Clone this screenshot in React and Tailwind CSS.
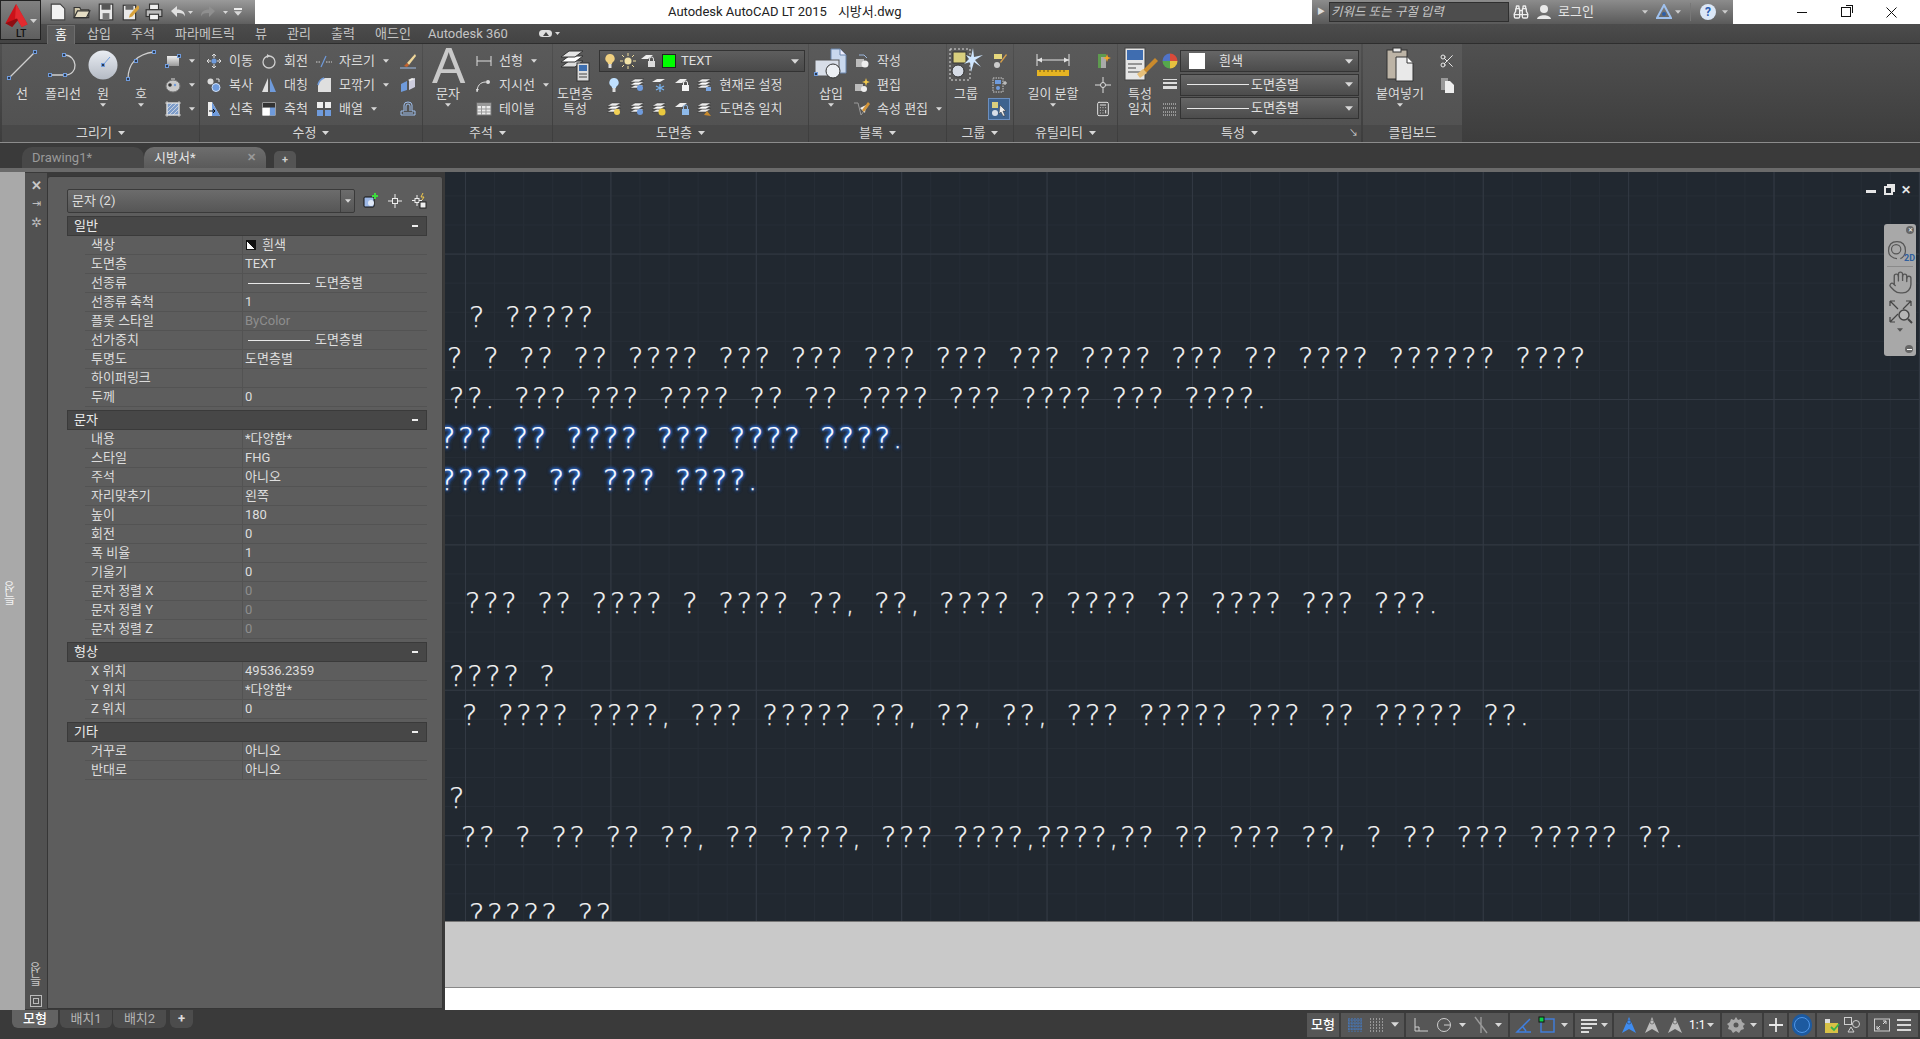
import React from "react";
import { Binoculars, Scissors, Calculator, Hand } from "lucide-react";

const B = "#6f9bdc";
const S = ({ s = 16, w, h, vb, children, className = "" }) => (
  <svg width={w || s} height={h || s} viewBox={vb || `0 0 ${w || s} ${h || s}`} fill="none" className={"shrink-0 " + className}>{children}</svg>
);
const Tri = ({ c = "#d8d8d8", s = 7 }) => (
  <svg width={s} height={Math.round(s * 0.6)} viewBox="0 0 7 4" className="shrink-0"><path d="M0 0h7L3.5 4z" fill={c} /></svg>
);
const H = ({ x, y }) => <rect x={x - 1.5} y={y - 1.5} width="3" height="3" stroke={B} fill="#2c3a50" />;

/* ---------- big ribbon icons ---------- */
const ILine = () => (<S s={34}><path d="M5 29L29 5" stroke="#cfcfcf" strokeWidth="1.2" /><H x={4} y={30} /><H x={30} y={4} /></S>);
const IPoly = () => (<S s={34}><path d="M4 27H19C33 27 32 7 18 7" stroke="#cfcfcf" strokeWidth="1.3" /><H x={4} y={27} /><H x={19} y={27} /><H x={18} y={7} /></S>);
const ICircle = () => (<S s={34}><defs><linearGradient id="cg" x1="0" y1="0" x2="0" y2="1"><stop offset="0" stopColor="#e9edf3" /><stop offset="1" stopColor="#b4bac4" /></linearGradient></defs><circle cx="17" cy="17" r="14.5" fill="url(#cg)" /><path d="M17 17L24 9" stroke={B} /><H x={17} y={17} /></S>);
const IArc = () => (<S s={34}><path d="M4 31C4 15 14 6 30 4" stroke="#cfcfcf" strokeWidth="1.3" /><H x={4} y={31} /><H x={12} y={13} /><H x={30} y={4} /></S>);
const IA = () => (<div className="h-[36px] w-[32px] text-center text-[50px] leading-[38px] font-['Liberation_Sans',sans-serif] text-[#c9c9c9]">A</div>);
const LayerStack = ({ size = 16, accent }) => (
  <S s={size} vb="0 0 16 16">
    <path d="M1 11l5-3h9l-5 3z" fill="#eee" stroke="#333" strokeWidth=".5" />
    <path d="M1 8l5-3h9l-5 3z" fill="#fff" stroke="#333" strokeWidth=".5" />
    <path d="M1 5l5-3h9l-5 3z" fill="#eee" stroke="#333" strokeWidth=".5" />
    {accent}
  </S>
);
const ILayerProp = () => (<S s={34}>
  <path d="M3 19l8-6h14l-8 6z" fill="#ddd" stroke="#333" /><path d="M3 14l8-6h14l-8 6z" fill="#fff" stroke="#333" /><path d="M3 9l8-6h14l-8 6z" fill="#e5e5e5" stroke="#333" />
  <rect x="19" y="15" width="12" height="18" fill="#dcdcdc" stroke="#333" /><rect x="21" y="17" width="8" height="6" fill="#3e6fb0" /><path d="M21 26h8M21 29h8" stroke="#444" />
</S>);
const IInsert = () => (<S s={36}>
  <path d="M18 2h9l6 6v18H18z" fill="#c9d8ee" stroke="#6b86ad" /><path d="M27 2v6h6" fill="#eef" stroke="#6b86ad" />
  <rect x="2" y="13" width="24" height="16" fill="#d8dee8" stroke="#555" /><circle cx="20" cy="24" r="7" fill="#eceff3" stroke="#333" /><H x={3} y={27} />
</S>);
const IGroup = () => (<S s={36}>
  <rect x="2" y="2" width="20" height="31" stroke="#ddd" strokeDasharray="2 2" />
  <rect x="5" y="5" width="13" height="11" fill="#d9cf7e" stroke="#333" />
  <circle cx="10" cy="24" r="6" fill="#d6dce6" stroke="#333" />
  <path d="M25 1l1 9 9-2-8 5 6 7-7-5-3 10-1-10-6 2 5-5-3-4 5 2z" fill="#cfe6ff" />
</S>);
const IRuler = () => (<S w={36} h={30} vb="0 0 36 30">
  <path d="M2 4v12M34 4v12M2 10h32" stroke="#e2e2e2" /><path d="M2 10l5-2.5v5zM34 10l-5-2.5v5z" fill="#e2e2e2" />
  <rect x="2" y="20" width="32" height="6" fill="#e6b422" /><path d="M5 20v2M9 20v2M13 20v2M17 20v2M21 20v2M25 20v2M29 20v2" stroke="#6b5210" />
</S>);
const IMatch = () => (<S s={36}>
  <rect x="3" y="1" width="20" height="32" fill="#e6e6e6" stroke="#444" /><rect x="5" y="3" width="16" height="10" fill="#3f6db0" />
  <path d="M6 17h14M6 21h8M6 25h14" stroke="#444" />
  <path d="M33 11L21 23l3 3 12-12z" fill="#c98a2c" /><path d="M21 22l-6 5 3 4 7-5z" fill="#e7c07a" />
</S>);
const IPaste = () => (<S s={36}>
  <rect x="5" y="3" width="20" height="29" fill="#bdb4a6" stroke="#333" /><rect x="11" y="1" width="8" height="4" fill="#eee" stroke="#333" />
  <path d="M14 10h11l6 6v18H14z" fill="#e9e9e9" stroke="#333" /><path d="M25 10v6h6" fill="#fff" stroke="#333" />
</S>);

/* ---------- small ribbon icons ---------- */
const IRect = () => (<S><defs><linearGradient id="rg" x1="0" x2="0" y1="0" y2="1"><stop offset="0" stopColor="#eee" /><stop offset="1" stopColor="#999" /></linearGradient></defs><rect x="2" y="3" width="12" height="10" fill="url(#rg)" /><H x={2} y={13} /><H x={14} y={3} /></S>);
const IHatchRound = () => (<S><ellipse cx="8" cy="9" rx="7" ry="6" fill="#c9c9c9" stroke="#777" /><circle cx="5" cy="8" r="1.8" fill="#333" /><circle cx="10" cy="8" r="1.2" fill={B} /><rect x="6" y="1" width="4" height="2" fill="#999" /></S>);
const IHatch = () => (<S><rect x="2" y="2" width="12" height="12" fill="#7d9cc9" stroke="#ddd" /><path d="M2 8l6-6M2 12l10-10M4 14l10-10M8 14l6-6M0 2h16M0 14h16M2 0v16M14 0v16" stroke="#e6e6e6" strokeWidth=".7" /></S>);
const IMove = () => (<S><path d="M8 1v4M8 11v4M1 8h4M11 8h4M8 1L6 3M8 1l2 2M8 15l-2-2M8 15l2-2M1 8l2-2M1 8l2 2M15 8l-2-2M15 8l-2 2" stroke="#ddd" /><circle cx="8" cy="8" r="2.6" fill={B} /></S>);
const IRotate = () => (<S><circle cx="8" cy="9" r="6" stroke="#cfcfcf" strokeWidth="1.3" /><path d="M6 1l3 2-3 2z" fill="#cfcfcf" /></S>);
const ITrim = () => (<S><path d="M0 9h5M10 9h6" stroke="#cfcfcf" strokeDasharray="1.5 1" /><path d="M5 14L10 3" stroke={B} strokeWidth="1.2" /></S>);
const ICopy = () => (<S><circle cx="4.5" cy="4.5" r="3" fill="#ddd" /><circle cx="10" cy="10.5" r="4" fill={B} stroke="#cfe0f8" /><path d="M10 2l3 0v3" stroke="#ddd" /></S>);
const IMirror = () => (<S><path d="M7 1v14H1z" fill="#dfdfdf" /><path d="M9 1v14h6z" fill={B} /></S>);
const IFillet = () => (<S><path d="M2 15V9Q2 3 9 1h6v14z" fill="#dfdfdf" /><path d="M2 8Q3 3 8 1" stroke={B} strokeWidth="1.6" /></S>);
const IStretch = () => (<S><path d="M2 1h4l8 14H2z" fill="#eee" /><path d="M6 1l8 14H6z" fill={B} /><path d="M3 10h6M7 8l2 2-2 2" stroke="#111" /></S>);
const IScale = () => (<S><rect x="1.5" y="1.5" width="13" height="13" fill="#ddd" /><rect x="1.5" y="7" width="7" height="7.5" fill="#fff" /><rect x="9" y="2" width="5" height="12.5" fill={B} /><rect x="2" y="2" width="12" height="4.5" fill="#333" /></S>);
const IArray = () => (<S><rect x="1" y="1" width="6" height="6" fill="#eee" /><rect x="9" y="1" width="6" height="6" fill="#eee" /><rect x="1" y="9" width="6" height="6" fill={B} /><rect x="9" y="9" width="6" height="6" fill={B} /></S>);
const IBrush = () => (<S><path d="M15 1L7 10l2 2 7-9z" fill="#f0d79a" /><path d="M7 10l-3 3 3 1 2-2z" fill="#c4622d" /><path d="M0 15h16" stroke="#9fbbe3" /></S>);
const IExplode = () => (<S><path d="M1 7l6-3v9l-6 2z" fill={B} /><path d="M9 3l6-2v9l-6 3z" fill="#ccd" /><path d="M8 3l4-2 3 1-5 2z" fill="#eee" /></S>);
const IOffset = () => (<S><path d="M1 14V10H4V4Q4 1 8 1T12 4V10H15V14z" stroke="#9fc0ee" /><path d="M3 12h10M6 10V5q0-2 2-2t2 2v5" stroke="#9fc0ee" /></S>);
const IDim = () => (<S><path d="M1 3v10M15 3v10M1 8h14" stroke="#ddd" /></S>);
const ILeader = () => (<S><path d="M1 15C1 9 4 5 10 5" stroke="#ddd" /><circle cx="12" cy="5" r="2" fill="#ddd" /><path d="M1 15l-1-3h3z" fill="#ddd" /></S>);
const ITable = () => (<S><rect x="1" y="2" width="14" height="12" fill="#ececec" stroke="#777" /><rect x="1" y="2" width="14" height="3" fill="#999" /><path d="M5.5 5v9M10 5v9M1 8h14M1 11h14" stroke="#999" /></S>);
const Bulb = ({ c = "#f0d080" }) => (<S><path d="M8 1a4.5 4.5 0 0 0-3 8c.8.8 1 1.4 1 2h4c0-.6.2-1.2 1-2a4.5 4.5 0 0 0-3-8z" fill={c} /><rect x="6.5" y="11" width="3" height="4" fill="#ddd" /></S>);
const SunI = () => (<S><circle cx="8" cy="8" r="3.5" fill="#f2e3a8" /><path d="M8 0v3M8 13v3M0 8h3M13 8h3M2 2l2 2M12 12l2 2M14 2l-2 2M2 14l2-2" stroke="#eedc9c" /></S>);
const LockI = ({ c = "#dcdcdc" }) => (<S><path d="M1 6l5-4h7l-5 4z" fill="#eee" /><rect x="8" y="8" width="7" height="6" fill={c} /><path d="M9.5 8V6a2 2 0 0 1 4 0v2" stroke={c} /></S>);
const LSun = () => <LayerStack accent={<circle cx="11" cy="11" r="3" fill="#f1d055" />} />;
const LBlue = () => <LayerStack accent={<circle cx="11" cy="11" r="3" fill={B} />} />;
const LGreen = () => <LayerStack accent={<path d="M8 14l3-4 4 5z" fill="#c98a2c" />} />;
const FreezeI = () => (<S><path d="M1 5l5-3h8l-5 3z" fill="#eee" /><path d="M9 7v8M5 9l8 4M13 9l-8 4" stroke="#79b3ee" strokeWidth="1.3" /></S>);
const Block1 = () => (<S><rect x="2" y="6" width="8" height="8" fill="#bbb" /><circle cx="11" cy="11" r="3.5" fill="#eee" /><path d="M5 2h5l3 3" stroke="#9db7dd" /></S>);
const Block2 = () => (<S><rect x="1" y="7" width="8" height="7" fill="#bbb" /><circle cx="10" cy="12" r="3" fill="#eee" /><path d="M12 1l1 3 3 1-3 1-1 3-1-3-3-1 3-1z" fill="#f2c94c" /></S>);
const AttrI = () => (<S><path d="M0 2l4 0 3 12 7-9" stroke="#9a9a9a" /><path d="M6 7l6-3-1 8z" fill="#eee" /><path d="M14 1L8 9l2 2 6-8z" fill="#d29438" /></S>);
const GroupS1 = () => (<S><rect x="3" y="1" width="8" height="5" fill="#e6d87c" /><circle cx="6" cy="12" r="3" fill="#ccc" /><path d="M15 1L9 9l1 1 6-8z" fill="#d6a04a" /></S>);
const GroupS2 = () => (<S><rect x="2" y="1" width="10" height="14" stroke="#ccc" strokeDasharray="1.5 1" /><rect x="4" y="3" width="6" height="4" fill={B} /><circle cx="7" cy="11" r="2" fill={B} /><path d="M12 6h4M14 4v4" stroke="#ddd" /></S>);
const GroupS3 = () => (<S><rect x="1" y="1" width="6" height="6" fill="#d9cf7e" /><circle cx="4" cy="12" r="3" fill="#d8dee8" /><path d="M9 4l6 6-3 0 2 5-2 0-2-4-2 2z" fill="#eee" stroke="#333" strokeWidth=".5" /></S>);
const UtilA = () => (<S><rect x="3" y="1" width="8" height="14" fill="#5e9a4f" /><rect x="6" y="4" width="5" height="11" fill="#aaa" /><path d="M12 1l1 3 3 1-3 1-1 3-1-3-3-1 3-1z" fill="#f5a623" /></S>);
const Cross = () => (<S><path d="M8 0v16M0 8h16" stroke="#ddd" /><circle cx="8" cy="8" r="2.5" stroke="#ddd" fill="#555" /></S>);
const Wheel = () => (<S><path d="M8 8V0.5A7.5 7.5 0 0 1 15.5 8z" fill="#d94a3a" /><path d="M8 8h7.5A7.5 7.5 0 0 1 8 15.5z" fill="#e7c13f" /><path d="M8 8v7.5A7.5 7.5 0 0 1 .5 8z" fill="#56a84c" /><path d="M8 8H.5A7.5 7.5 0 0 1 8 .5z" fill="#5073c8" /></S>);
const LwI = () => (<S><rect x="1" y="2" width="14" height="1" fill="#ddd" /><rect x="1" y="5" width="14" height="2" fill="#ddd" /><rect x="1" y="9" width="14" height="3" fill="#ddd" /></S>);
const LtI = () => (<S><path d="M1 3h14M1 7h14M1 11h14M1 14h14" stroke="#ddd" strokeDasharray="1 1" /></S>);
const CopyDoc = () => (<S><path d="M2 1h7v12H2z" fill="#999" /><path d="M6 4h5l4 4v8H6z" fill="#eee" /></S>);

/* ---------- layout pieces ---------- */
const Panel = ({ className, title, corner, noArrow, children }) => (
  <div className={"flex flex-col shrink-0 " + className}>
    <div className="flex h-[81px] bg-gradient-to-b from-[#5a5a5a] to-[#525252]">{children}</div>
    <div className="relative flex h-[17px] items-center justify-center gap-[6px] bg-[#494949] pb-[2px] text-[#d8d8d8]">
      <span>{title}</span>{!noArrow && <Tri />}
      {corner && <span className="absolute right-[3px] top-[4px] text-[9px] leading-[9px]">↘</span>}
    </div>
  </div>
);
const Big = ({ className, icon, label, arrow }) => (
  <div className={"flex flex-col items-center shrink-0 pt-[3px] " + className}>
    <div className="flex h-[36px] items-center justify-center">{icon}</div>
    <div className="mt-[3px] text-center leading-[15px] text-[#dcdcdc]">{label}</div>
    {arrow && <div className="mt-[2px]"><Tri s={6} /></div>}
  </div>
);
const Col = ({ className = "", children }) => <div className={"flex flex-col pt-[5px] " + className}>{children}</div>;
const Sm = ({ icon, label, arrow, className = "" }) => (
  <div className={"flex h-[24px] items-center shrink-0 " + className}>
    {icon}
    {label && <span className="ml-[7px] whitespace-nowrap text-[#dcdcdc]">{label}</span>}
    {arrow && <span className="ml-[8px]"><Tri s={6} /></span>}
  </div>
);
const Combo = ({ children }) => (
  <div className="flex h-[22px] items-center border border-[#333] bg-gradient-to-b from-[#666] to-[#4c4c4c] pl-[6px] pr-[5px]">
    <div className="flex min-w-0 flex-1 items-center text-[#e0e0e0]">{children}</div><Tri s={8} />
  </div>
);

/* ---------- ribbon ---------- */
const Ribbon = () => (
  <div className="flex h-[98px] bg-gradient-to-b from-[#505050] to-[#3d3d3d] pl-[2px] gap-[1px]">
    <Panel className="w-[197px]" title="그리기">
      <Big className="w-[40px]" icon={<ILine />} label="선" />
      <Big className="w-[42px]" icon={<IPoly />} label="폴리선" />
      <Big className="w-[38px]" icon={<ICircle />} label="원" arrow />
      <Big className="w-[38px]" icon={<IArc />} label="호" arrow />
      <Col className="pl-[5px]">
        <Sm icon={<IRect />} arrow /><Sm icon={<IHatchRound />} arrow /><Sm icon={<IHatch />} arrow />
      </Col>
    </Panel>
    <Panel className="w-[222px]" title="수정">
      <Col className="pl-[6px] w-[61px]"><Sm icon={<IMove />} label="이동" /><Sm icon={<ICopy />} label="복사" /><Sm icon={<IStretch />} label="신축" /></Col>
      <Col className="w-[55px]"><Sm icon={<IRotate />} label="회전" /><Sm icon={<IMirror />} label="대칭" /><Sm icon={<IScale />} label="축척" /></Col>
      <Col className="w-[84px]"><Sm icon={<ITrim />} label="자르기" arrow /><Sm icon={<IFillet />} label="모깎기" arrow /><Sm icon={<IArray />} label="배열" arrow /></Col>
      <Col><Sm icon={<IBrush />} /><Sm icon={<IExplode />} /><Sm icon={<IOffset />} /></Col>
    </Panel>
    <Panel className="w-[129px]" title="주석">
      <Big className="w-[50px]" icon={<IA />} label="문자" arrow />
      <Col className="pl-[3px]"><Sm icon={<IDim />} label="선형" arrow /><Sm icon={<ILeader />} label="지시선" arrow /><Sm icon={<ITable />} label="테이블" /></Col>
    </Panel>
    <Panel className="w-[255px]" title="도면층">
      <Big className="w-[44px]" icon={<ILayerProp />} label={<>도면층<br />특성</>} />
      <div className="flex flex-1 flex-col pt-[6px] pl-[2px] pr-[3px]">
        <div className="flex h-[22px] items-center border border-[#333] bg-gradient-to-b from-[#5e5e5e] to-[#4a4a4a] pl-[2px] pr-[5px]">
          <Bulb /><span className="ml-[2px]"><SunI /></span><span className="ml-[4px]"><LockI /></span>
          <span className="ml-[6px] h-[14px] w-[14px] shrink-0 bg-[#00ff00] border border-[#222]" />
          <span className="ml-[5px] flex-1 text-[#e0e0e0]">TEXT</span><Tri s={8} />
        </div>
        <div className="flex h-[24px] items-center pl-[7px] mt-[1px] gap-[6.5px]">
          <Bulb c="#bfe0ff" /><LBlue /><FreezeI /><LockI c="#f5f5f5" /><LayerStack accent={<path d="M10 10h5v4h-5z" fill="#7aa5e0" />} /><span className="ml-[1px] text-[#dcdcdc]">현재로 설정</span>
        </div>
        <div className="flex h-[24px] items-center pl-[7px] gap-[6.5px]">
          <LSun /><LBlue /><LayerStack accent={<circle cx="11" cy="11" r="3.5" fill="#e9c83e" />} /><LockI c="#8db9ea" /><LGreen /><span className="ml-[1px] text-[#dcdcdc]">도면층 일치</span>
        </div>
      </div>
    </Panel>
    <Panel className="w-[137px]" title="블록">
      <Big className="w-[44px]" icon={<IInsert />} label="삽입" arrow />
      <Col className="pl-[1px]"><Sm icon={<Block1 />} label="작성" /><Sm icon={<Block2 />} label="편집" /><Sm icon={<AttrI />} label="속성 편집" arrow /></Col>
    </Panel>
    <Panel className="w-[66px]" title="그룹">
      <Big className="w-[38px]" icon={<IGroup />} label="그룹" />
      <Col className="w-[28px] items-center">
        <Sm icon={<GroupS1 />} /><Sm icon={<GroupS2 />} />
        <div className="flex h-[22px] w-[22px] items-center justify-center border border-[#6b8fc0] bg-[#3e638f] mt-[1px]"><GroupS3 /></div>
      </Col>
    </Panel>
    <Panel className="w-[103px]" title="유틸리티">
      <Big className="w-[78px]" icon={<IRuler />} label="길이 분할" arrow />
      <Col className="w-[22px] items-center"><Sm icon={<UtilA />} /><Sm icon={<Cross />} /><Sm icon={<Calculator size={16} color="#e0e0e0" strokeWidth={1.5} />} /></Col>
    </Panel>
    <Panel className="w-[243px]" title="특성" corner>
      <Big className="w-[44px]" icon={<IMatch />} label={<>특성<br />일치</>} />
      <Col className="w-[16px] items-center"><Sm icon={<Wheel />} /><Sm icon={<LwI />} /><Sm icon={<LtI />} /></Col>
      <div className="flex w-[181px] flex-col gap-[1.5px] pt-[6px] pl-[2px]">
        <Combo><span className="ml-[2px] mr-[14px] h-[16px] w-[16px] bg-white" />흰색</Combo>
        <Combo><span className="mr-[2px] h-px w-[62px] bg-[#e8e8e8]" /><span>도면층별</span></Combo>
        <Combo><span className="mr-[2px] h-px w-[62px] bg-[#e8e8e8]" /><span>도면층별</span></Combo>
      </div>
    </Panel>
    <Panel className="ml-[1px] w-[99px]" title="클립보드" noArrow>
      <Big className="w-[74px]" icon={<IPaste />} label="붙여넣기" arrow />
      <Col className="w-[20px] items-center"><Sm icon={<Scissors size={16} color="#e8e8e8" strokeWidth={1.5} />} /><Sm icon={<CopyDoc />} /></Col>
    </Panel>
  </div>
);

/* ---------- title ---------- */
const Qat = ({ children }) => <span className="flex h-[24px] w-[24px] items-center justify-center">{children}</span>;
const QNew = () => (<S s={18} vb="0 0 16 16"><path d="M2 1h8l4 4v10H2z" fill="#f2f2f2" stroke="#444" /></S>);
const QOpen = () => (<S s={18} vb="0 0 16 16"><path d="M1 4h5l1 2h7v7H1z" fill="#cfc6a8" stroke="#333" /><path d="M1 13l3-6h11l-3 6z" fill="#e5ddc4" stroke="#333" /></S>);
const QSave = () => (<S s={18} vb="0 0 16 16"><rect x="2" y="1" width="12" height="14" fill="#e9e9e9" stroke="#333" /><rect x="4" y="1" width="8" height="5" fill="#555" /><rect x="5" y="9" width="6" height="6" fill="#777" /></S>);
const QSaveAs = () => (<S s={18} vb="0 0 16 16"><rect x="2" y="2" width="11" height="13" fill="#e9e9e9" stroke="#333" /><rect x="4" y="2" width="7" height="4" fill="#666" /><path d="M15 2L8 10l-1 3 3-1 7-8z" fill="#d8a23c" /></S>);
const QPrint = () => (<S s={18} vb="0 0 16 16"><rect x="4" y="1" width="8" height="5" fill="#eee" stroke="#333" /><rect x="1" y="6" width="14" height="6" fill="#bbb" stroke="#333" /><rect x="4" y="10" width="8" height="5" fill="#f3f3f3" stroke="#333" /></S>);
const QUndo = ({ c = "#e0e0e0", flip }) => (<S className={flip ? "-scale-x-100" : ""}><path d="M1 7l6-5v3.5c5 0 8 2 8 7-1-3-4-4-8-3.5V13z" fill={c} /></S>);

const TitleBar = () => (
  <div className="flex h-[24px]">
    <div className="flex w-[255px] items-center bg-gradient-to-b from-[#9a9a9a] to-[#5f5f5f] pl-[46px]">
      <Qat><QNew /></Qat><Qat><QOpen /></Qat><Qat><QSave /></Qat><Qat><QSaveAs /></Qat><Qat><QPrint /></Qat>
      <Qat><QUndo /></Qat><span className="-ml-[2px] mr-[4px]"><Tri s={5} /></span>
      <span className="ml-[3px]"><QUndo c="#8f8f8f" flip /></span><span className="ml-[7px]"><Tri s={5} /></span>
      <span className="ml-[6px] flex flex-col items-center gap-[1px]"><span className="h-[2px] w-[8px] bg-[#eee]" /><Tri s={8} /></span>
    </div>
    <div className="flex flex-1 items-center bg-white pl-[413px] text-[#222] text-[13px]">
      <span>Autodesk AutoCAD LT 2015</span><span className="ml-[11px]">시방서.dwg</span>
    </div>
    <div className="flex w-[421px] items-center bg-gradient-to-b from-[#8c8c8c] to-[#5a5a5a]">
      <span className="ml-[5px] mr-[4px] text-[8px] text-[#ddd]">▶</span>
      <div className="flex h-[20px] w-[180px] items-center border border-[#2f2f2f] bg-[#4d4d4d] pl-[1px] italic text-[12.5px] text-[#c8c8c8]">키워드 또는 구절 입력</div>
      <span className="ml-[4px]"><Binoculars size={16} color="#eee" /></span>
      <span className="ml-[7px]"><S><circle cx="8" cy="5" r="4" fill="#e9e9e9" /><path d="M1 15c1-5 13-5 14 0z" fill="#e9e9e9" /></S></span>
      <span className="ml-[6px] text-[#e6e6e6]">로그인</span>
      <span className="ml-[48px]"><Tri s={6} c="#ccc" /></span>
      <span className="ml-[8px]"><S><path d="M8 1l7 13H1z" stroke="#9fc1ee" strokeWidth="2" /><circle cx="8" cy="10" r="2" fill="#2f5fa8" /></S></span>
      <span className="ml-[3px]"><Tri s={6} c="#ccc" /></span>
      <span className="ml-[9px] h-[18px] w-px bg-[#777]" />
      <span className="ml-[9px] flex h-[16px] w-[16px] items-center justify-center rounded-full bg-[#dbe7f7] text-[12px] font-bold text-[#2a5bb0] leading-none">?</span>
      <span className="ml-[6px]"><Tri s={6} c="#ccc" /></span>
    </div>
    <div className="flex w-[187px] bg-white">
      <span className="ml-[64px] mt-[12px] h-px w-[10px] bg-[#111]" />
      <span className="ml-[34px] mt-[7px] relative h-[10px] w-[10px] border border-[#111]"><span className="absolute -right-[3px] -top-[3px] h-[8px] w-[7px] border-r border-t border-[#111]" /></span>
      <span className="ml-[35px] mt-[7px]"><S s={11}><path d="M.5.5l10 10M10.5.5l-10 10" stroke="#111" /></S></span>
    </div>
  </div>
);

const TabsRow = () => {
  const Tab = ({ className, children }) => <span className={"text-center text-[#c4c4c4] shrink-0 " + className}>{children}</span>;
  return (
    <div className="flex h-[20px] items-center border-b border-[#2e2e2e] bg-gradient-to-b from-[#4c4c4c] to-[#434343] pl-[47px]">
      <span className="flex h-[19px] mt-[2px] w-[28px] shrink-0 items-center justify-center bg-[#5b5b5b] border-x border-t border-[#6d6d6d] text-white">홈</span>
      <Tab className="ml-[2px] w-[44px]">삽입</Tab><Tab className="w-[44px]">주석</Tab><Tab className="w-[80px]">파라메트릭</Tab><Tab className="w-[32px]">뷰</Tab>
      <Tab className="w-[44px]">관리</Tab><Tab className="w-[44px]">출력</Tab><Tab className="w-[56px]">애드인</Tab><Tab className="w-[94px]">Autodesk 360</Tab>
      <span className="ml-[24px] h-[7px] w-[13px] rounded-sm bg-[#ddd] flex items-center justify-center"><span className="h-0 w-0 border-x-[3px] border-b-[4px] border-x-transparent border-b-[#444]" /></span>
      <span className="ml-[3px]"><Tri s={5} /></span>
    </div>
  );
};

const FileTabs = () => (
  <div className="flex h-[25px] items-end bg-[#3a3a3a] pl-[22px]">
    <div className="flex h-[21px] w-[122px] items-center rounded-t-[10px] bg-[#484848] pl-[10px] text-[#9a9a9a]">Drawing1*</div>
    <div className="flex h-[21px] w-[122px] items-center rounded-t-[10px] bg-gradient-to-b from-[#6e6e6e] to-[#5a5a5a] pl-[10px] text-[#e6e6e6]">
      <span>시방서*</span><span className="ml-auto mr-[10px] text-[#999] text-[11px] font-bold">✕</span>
    </div>
    <div className="ml-[8px] flex h-[17px] w-[22px] items-center justify-center rounded-t-[5px] bg-[#545454] text-[11px] font-bold text-[#ccc]">+</div>
  </div>
);

/* ---------- property palette ---------- */
const Row = ({ k, v, dim, children }) => (
  <div className="ml-[18px] flex h-[19px] items-center border-b border-[#535353] text-[#dcdcdc]">
    <span className="w-[157px] pl-[6px] shrink-0 whitespace-nowrap">{k}</span>
    <span className={"flex h-full flex-1 items-center border-l border-[#535353] pl-[2px] " + (dim ? "text-[#8e8e8e]" : "text-[#dedede]")}>{children || v}</span>
  </div>
);
const LineVal = () => (<><span className="ml-[3px] mr-[5px] h-px w-[62px] bg-[#e8e8e8]" /><span>도면층별</span></>);
const Sec = ({ title, children }) => (
  <div className="mb-[3px] mr-[15px]">
    <div className="flex h-[20px] items-center justify-between border border-[#3a3a3a] bg-[#474747] pl-[6px] pr-[8px] text-[#ececec]">
      <span>{title}</span><span className="h-[2px] w-[6px] bg-[#eee]" />
    </div>
    {children}
  </div>
);
const Palette = () => (
  <div className="flex w-[420px] shrink-0 bg-[#3a3a3a] pt-[1px] pb-[1px]">
    <div className="flex w-[22px] shrink-0 flex-col items-center bg-[#515151] pt-[6px]">
      <span className="text-[13px] font-bold leading-[13px] text-[#c8c8c8]">✕</span>
      <span className="mt-[6px] text-[11px] leading-[12px] text-[#bdbdbd]">⇥</span>
      <span className="mt-[6px] text-[13px] leading-[13px] text-[#bdbdbd]">✲</span>
      <span className="mt-auto ml-[3px] rotate-180 text-[12px] leading-[13px] text-[#c8c8c8] [writing-mode:vertical-rl]">특성</span>
      <span className="mb-[2px] mt-[9px] flex h-[12px] w-[12px] items-center justify-center border border-[#bbb]"><span className="h-[6px] w-[6px] border border-[#bbb]" /></span>
    </div>
    <div className="mr-[2px] mt-[3px] min-w-0 flex-1 rounded-t-[3px] border border-[#363636] bg-[#5d5d5d] pl-[19px]">
      <div className="flex h-[24px] mt-[12px] mb-[3px] items-center">
        <div className="flex h-[24px] w-[288px] items-center rounded-[2px] border border-[#3a3a3a] bg-gradient-to-b from-[#6c6c6c] to-[#565656] pl-[4px] text-[#dedede]">
          <span className="flex-1">문자 (2)</span>
          <span className="flex h-full w-[14px] items-center justify-center border-l border-[#3f3f3f]"><Tri s={6} /></span>
        </div>
        <span className="ml-[8px]"><S><rect x="1" y="4" width="10" height="10" rx="1" fill="#9db8e6" stroke="#111" /><circle cx="8" cy="10" r="3" fill="#dfe8f7" /><path d="M9 3h6M12 0v6" stroke="#3ddc3d" strokeWidth="2" /></S></span>
        <span className="ml-[8px]"><S><path d="M8 1v14M1 8h14" stroke="#eee" /><rect x="5.5" y="5.5" width="5" height="5" fill="#5d5d5d" stroke="#eee" /></S></span>
        <span className="ml-[8px]"><S><path d="M6 2v11M1 7.5h10" stroke="#eee" /><rect x="4" y="5.5" width="4" height="4" fill="#5d5d5d" stroke="#eee" /><rect x="9" y="9" width="6" height="6" fill="#eee" stroke="#222" /><path d="M12 0l-2 4h3l-2 3" stroke="#f2c94c" /></S></span>
      </div>
      <Sec title="일반">
        <Row k="색상"><span className="ml-[1px] mr-[6px] h-[10px] w-[10px] border border-[#111] bg-[linear-gradient(45deg,#fff_50%,#111_50%)]" /><span>흰색</span></Row>
        <Row k="도면층" v="TEXT" />
        <Row k="선종류"><LineVal /></Row>
        <Row k="선종류 축척" v="1" />
        <Row k="플롯 스타일" v="ByColor" dim />
        <Row k="선가중치"><LineVal /></Row>
        <Row k="투명도" v="도면층별" />
        <Row k="하이퍼링크" v="" />
        <Row k="두께" v="0" />
      </Sec>
      <Sec title="문자">
        <Row k="내용" v="*다양함*" />
        <Row k="스타일" v="FHG" />
        <Row k="주석" v="아니오" />
        <Row k="자리맞추기" v="왼쪽" />
        <Row k="높이" v="180" />
        <Row k="회전" v="0" />
        <Row k="폭 비율" v="1" />
        <Row k="기울기" v="0" />
        <Row k="문자 정렬 X" v="0" dim />
        <Row k="문자 정렬 Y" v="0" dim />
        <Row k="문자 정렬 Z" v="0" dim />
      </Sec>
      <Sec title="형상">
        <Row k="X 위치" v="49536.2359" />
        <Row k="Y 위치" v="*다양함*" />
        <Row k="Z 위치" v="0" />
      </Sec>
      <Sec title="기타">
        <Row k="거꾸로" v="아니오" />
        <Row k="반대로" v="아니오" />
      </Sec>
    </div>
  </div>
);

/* ---------- canvas ---------- */
const LINES = [
  { x: 469, y: 306, t: "? ?????" },
  { x: 447, y: 347, t: "? ? ?? ?? ???? ??? ??? ??? ??? ??? ???? ??? ?? ???? ?????? ????" },
  { x: 449, y: 387, t: "??. ??? ??? ???? ?? ?? ???? ??? ???? ??? ????." },
  { x: 440, y: 427, t: "??? ?? ???? ??? ???? ????.", blue: true },
  { x: 440, y: 469, t: "????? ?? ??? ????.", blue: true },
  { x: 465, y: 592, t: "??? ?? ???? ? ???? ??, ??, ???? ? ???? ?? ???? ??? ???." },
  { x: 449, y: 665, t: "???? ?" },
  { x: 462, y: 704, t: "? ???? ????, ??? ????? ??, ??, ??, ??? ????? ??? ?? ????? ??." },
  { x: 449, y: 787, t: "?" },
  { x: 461, y: 826, t: "?? ? ?? ?? ??, ?? ????, ??? ????,????,?? ?? ??? ??, ? ?? ??? ????? ??." },
  { x: 469, y: 903, t: "????? ??" },
];
const Canvas = () => (
  <div className="relative min-h-0 flex-1 overflow-hidden bg-[#212830] bg-[linear-gradient(#323943_1px,transparent_1px),linear-gradient(90deg,#323943_1px,transparent_1px),linear-gradient(#262d36_1px,transparent_1px),linear-gradient(90deg,#262d36_1px,transparent_1px)] bg-[size:145.4px_145.4px,145.4px_145.4px,29.08px_29.08px,29.08px_29.08px] bg-[position:20px_81.6px,20px_81.6px,20px_81.6px,20px_81.6px]">
    {LINES.map((l, i) => (
      <div
        key={i}
        style={{ left: l.x - 445, top: l.y - 172 - 4 }}
        className={"absolute whitespace-pre font-['DejaVu_Sans',sans-serif] font-extralight text-[29px] leading-[30px] tracking-[2.75px] [word-spacing:6.05px] [-webkit-text-stroke:0.25px_currentColor] " + (l.blue ? "text-white [text-shadow:0_0_3px_#2f74e6,0_0_3px_#2f74e6,0_0_4px_#2f74e6,0_0_4px_#2f74e6]" : "text-[#f2f3f4]")}
      >
        {l.t.split(/([.,])/).map((p, j) => (j % 2 ? <span key={j} className="tracking-[1.6px]">{p}</span> : p))}
      </div>
    ))}
    <div className="absolute right-[9px] top-[12px] flex items-center gap-[8px]">
      <span className="mt-[3px] h-[3px] w-[10px] bg-[#e6e6e6]" />
      <span className="relative h-[9px] w-[9px] border-2 border-[#e6e6e6]"><span className="absolute -right-[4px] -top-[4px] h-[8px] w-[8px] border-r-2 border-t-2 border-[#e6e6e6]" /></span>
      <span className="text-[12px] font-black leading-[12px] text-[#e6e6e6]">✕</span>
    </div>
    <div className="absolute right-[4px] top-[52px] flex h-[132px] w-[32px] flex-col items-center rounded-[3px] bg-[#a8a8a8]">
      <span className="ml-auto mr-[2px] mt-[2px] flex h-[8px] w-[8px] items-center justify-center rounded-full bg-[#666] text-[6px] leading-none text-white">✕</span>
      <span className="relative mr-[6px] mt-[6px]"><S s={22} vb="0 0 26 26"><path d="M3 13C3 5 7 2 13 2c7 0 10 4 10 11 0 4-3 8-6 9" stroke="#555" strokeWidth="1.4" /><circle cx="12" cy="11" r="5.5" stroke="#555" strokeWidth="1.4" /><path d="M3 13c0 5 5 9 10 9" stroke="#555" strokeWidth="1.4" /></S><span className="absolute -bottom-[1px] right-[-7px] text-[9px] font-bold leading-[9px] text-[#2f5f9e]">2D</span></span>
      <span className="mt-[4px] h-px w-[26px] bg-[#8a8a8a]" />
      <span className="mt-[3px]"><Hand size={25} color="#555" strokeWidth={1.3} /></span>
      <span className="mt-[4px]"><S s={25} vb="0 0 25 25"><path d="M2 2l8 8M2 2v5M2 2h5M2 23l8-8M2 23v-5M2 23h5M23 2l-8 8M23 2v5M23 2h-5" stroke="#444" strokeWidth="1.2" /><circle cx="16" cy="16" r="5" stroke="#444" fill="#b5b5b5" strokeWidth="1.4" /><path d="M20 20l4 4" stroke="#444" strokeWidth="2" /></S></span>
      <span className="mt-[4px]"><Tri c="#555" s={6} /></span>
      <span className="ml-auto mr-[3px] mt-auto mb-[3px] flex h-[8px] w-[8px] items-center justify-center rounded-full bg-[#666]"><span className="h-[1px] w-[5px] bg-white" /></span>
    </div>
  </div>
);

/* ---------- status ---------- */
const St = ({ className, children }) => <div className={"flex h-[24px] items-center justify-around border-r-2 border-[#3d3d3d] bg-[#565656] px-[3px] shrink-0 " + className}>{children}</div>;
const Grid = ({ children }) => <S s={18}>{children}</S>;
const AnnA = ({ c }) => (<S s={18}><path d="M9 1l7 16-7-4-7 4z" fill={c} /><circle cx="9" cy="6" r="2" fill={c} stroke="#333" strokeWidth=".5" /></S>);
const StatusBar = () => (
  <div className="flex h-[29px] items-center justify-end bg-[#3a3a3a] text-[#e8e8e8]">
    <St className="w-[34px]"><span className="font-medium text-white">모형</span></St>
    <St className="w-[65px]">
      <Grid><path d="M2 4h14M2 7h14M2 10h14M2 13h14M3 2v14M6 2v14M9 2v14M12 2v14M15 2v14" stroke="#3f8cf0" strokeWidth=".8" strokeDasharray="1 .6" /></Grid>
      <Grid><path d="M2 3h14M2 6h14M2 9h14M2 12h14M2 15h14" stroke="#d8d8d8" strokeDasharray="1 2" /></Grid><Tri s={8} />
    </St>
    <St className="w-[104px]">
      <Grid><path d="M3 2v13h13M3 11h4v4" stroke="#cfcfcf" /></Grid>
      <Grid><circle cx="9" cy="9" r="6.5" stroke="#cfcfcf" /><path d="M9 9h6" stroke="#cfcfcf" /></Grid><Tri s={7} />
      <Grid><path d="M3 1l12 16M9 1v16" stroke="#9a9a9a" strokeWidth="1.4" /></Grid><Tri s={7} />
    </St>
    <St className="w-[65px]">
      <Grid><path d="M15 3L2 16h14M8 11l3 4" stroke="#3f7fe0" strokeWidth="1.5" /></Grid>
      <Grid><rect x="3" y="3" width="13" height="13" stroke="#3f7fe0" strokeWidth="1.4" /><rect x="1" y="1" width="5" height="5" fill="#0fd14a" stroke="#111" /></Grid><Tri s={7} />
    </St>
    <St className="w-[39px]">
      <Grid><rect x="1" y="3" width="16" height="2" fill="#ddd" /><rect x="1" y="7" width="16" height="2" fill="#ddd" /><rect x="1" y="11" width="11" height="2" fill="#ddd" /><rect x="1" y="15" width="8" height="2" fill="#ddd" /></Grid><Tri s={7} />
    </St>
    <St className="w-[108px]">
      <AnnA c="#3f8cf0" /><AnnA c="#bdbdbd" /><AnnA c="#bdbdbd" /><span className="flex items-center gap-[2px] text-white"><span className="text-[12px]">1:1</span><Tri s={7} /></span>
    </St>
    <St className="w-[42px]"><Grid><path d="M9 1l2 3 3-1 1 3 3 2-2 2 1 3-3 1-2 3-3-2-3 2-2-3-3-1 1-3-2-2 3-2 1-3 3 1z" fill="#a8a8a8" /><circle cx="9" cy="9" r="2.5" fill="#565656" /></Grid><Tri s={7} /></St>
    <St className="w-[25px]"><Grid><path d="M9 2v14M2 9h14" stroke="#e8e8e8" strokeWidth="1.8" /></Grid></St>
    <St className="w-[28px]"><span className="flex h-[22px] w-[22px] items-center justify-center rounded-full bg-[#1d5aa0]"><span className="h-[16px] w-[16px] rounded-full border border-[#4f96e8]" /></span></St>
    <St className="w-[51px]">
      <Grid><rect x="3" y="7" width="13" height="10" fill="#d8c146" /><path d="M3 3h5v4H3z" fill="#ddd" /><path d="M9 11l3 3 5-6" stroke="#36b24a" strokeWidth="1.8" /></Grid>
      <Grid><rect x="1.5" y="1.5" width="7" height="7" stroke="#cfcfcf" /><circle cx="13" cy="8" r="3.5" stroke="#cfcfcf" /><path d="M5 16l3-5 3 5z" stroke="#cfcfcf" /></Grid>
    </St>
    <St className="w-[52px] border-r-0">
      <Grid><rect x="1.5" y="3" width="15" height="12" stroke="#ccc" /><path d="M4 13l3-3M13 5l-3 3M4 10v3h3M13 8V5h-3" stroke="#ddd" /></Grid>
      <Grid><path d="M2 4h14M2 9h14M2 14h14" stroke="#d8d8d8" strokeWidth="2" /></Grid>
    </St>
  </div>
);

const LayoutTabs = () => (
  <div className="absolute bottom-[11px] left-[12px] flex items-center text-[13px]">
    <span className="flex h-[18px] w-[46px] items-center justify-center rounded-b-[6px] bg-[#626262] font-medium text-white">모형</span>
    <span className="ml-[2px] flex h-[18px] w-[52px] items-center justify-center rounded-b-[6px] bg-[#4c4c4c] text-[#b5b5b5]">배치1</span>
    <span className="ml-[1px] flex h-[18px] w-[53px] items-center justify-center rounded-b-[6px] bg-[#4c4c4c] text-[#b5b5b5]">배치2</span>
    <span className="ml-[4px] flex h-[18px] w-[23px] items-center justify-center rounded-b-[6px] bg-[#4c4c4c] text-[#ddd] font-bold">+</span>
  </div>
);

export default function App() {
  return (
    <div className="relative flex h-screen w-screen flex-col overflow-hidden bg-[#3a3a3a] font-['Roboto','Noto_Sans_CJK_KR',sans-serif] text-[13px] leading-[16px]">
      <TitleBar />
      <TabsRow />
      <Ribbon />
      <div className="h-px bg-[#8c8c8c]" />
      <FileTabs />
      <div className="h-[4px] bg-[#6a6a6a]" />
      <div className="flex min-h-0 flex-1">
        <div className="relative w-[25px] shrink-0 bg-[#a9a9a9]">
          <span className="absolute left-[4px] top-[409px] rotate-180 text-[12px] leading-[14px] text-[#f2f2f2] [writing-mode:vertical-rl]">특성</span>
        </div>
        <Palette />
        <div className="flex min-w-0 flex-1 flex-col">
          <Canvas />
          <div className="h-[66px] border-t border-[#777] bg-[#c9c9c9]" />
          <div className="h-[23px] border-t border-[#888] bg-white" />
        </div>
      </div>
      <StatusBar />
      <LayoutTabs />
      <div className="absolute left-0 top-0 flex h-[40px] w-[41px] flex-col border border-[#222] bg-gradient-to-b from-[#808080] to-[#5f5f5f]">
        <svg width="23" height="25" viewBox="0 0 23 25" className="ml-[4px] mt-[3px]"><path d="M11 0L0 20l7 4 5-8 5 8 6-3z" fill="#cc1219" /><path d="M11 0l-1 15 2 1 5 8 6-3z" fill="#e22a2f" /><path d="M0 20l12-5 1 2-6 7z" fill="#8e0d12" /></svg>
        <span className="ml-[15px] mt-[1px] text-[10px] leading-[10px] font-medium text-[#111]">LT</span>
        <span className="absolute right-[3px] top-[18px]"><Tri s={7} c="#d0d0d0" /></span>
      </div>
    </div>
  );
}
